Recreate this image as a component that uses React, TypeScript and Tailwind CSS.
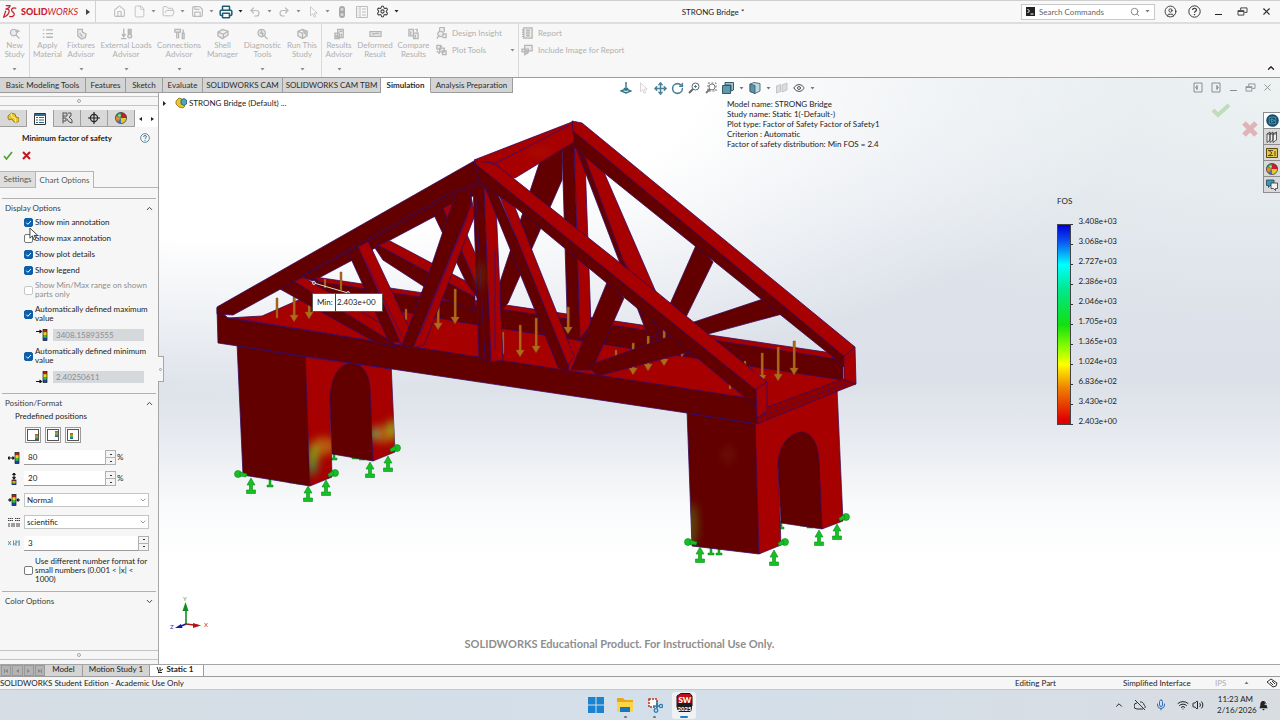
import React from "react";
import {
  ChevronDown,
  ChevronUp,
  CircleUser,
  Eye,
  File,
  FolderOpen,
  House,
  Mic,
  MousePointer2,
  Move,
  Printer,
  Redo2,
  RotateCw,
  Save,
  Search,
  Settings,
  Undo2,
  Volume2,
  Wifi,
  X,
} from "lucide-react";

const SMALL = 13;

function Caret({ className = "" }: { className?: string }) {
  return (
    <svg viewBox="0 0 5 3" className={"h-[3px] w-[5px] " + className}>
      <path d="M0.5 0h4L2.5 2.6z" fill="currentColor" />
    </svg>
  );
}

function HelpIcon({ className = "" }: { className?: string }) {
  return (
    <svg viewBox="0 0 24 24" fill="none" stroke="currentColor" strokeWidth="1.8" className={className}>
      <circle cx="12" cy="12" r="10.5" />
      <path d="M8.6 9.4c0-2 1.5-3.4 3.5-3.4s3.5 1.3 3.5 3.1c0 2.6-3.5 2.6-3.5 5.2" strokeWidth="2.2" />
      <path d="M12 16.6v2.2" strokeWidth="2.4" />
    </svg>
  );
}

function RestoreIcon({ className = "" }: { className?: string }) {
  return (
    <svg viewBox="0 0 12 10" fill="none" stroke="currentColor" className={className}>
      <path d="M1 4h6.5v5H1zM1 5h6.5M4 3.5V1h7v5H8" />
    </svg>
  );
}

/* ---------- title bar ---------- */

function QuickButton({
  label,
  children,
  menu = false,
  dark = false,
}: {
  label: string;
  children: React.ReactNode;
  menu?: boolean;
  dark?: boolean;
}) {
  return (
    <span className={"flex items-center " + (dark ? "text-[#3a3a3a]" : "text-[#bdbdbd]")}>
      <button aria-label={label} className="flex h-5 w-5 items-center justify-center">
        {children}
      </button>
      {menu && (
        <span className="flex w-[9px] justify-center">
          <Caret className={dark ? "text-[#222]" : "text-[#8a8a8a]"} />
        </span>
      )}
    </span>
  );
}

function TitleBar() {
  return (
    <header className="flex h-6 shrink-0 items-center border-t border-b-2 border-t-[#cfcfcf] border-b-[#dedede] bg-[#f8f8f8]">
      <div className="flex h-full w-24 shrink-0 items-center border-r border-[#d2d2d2] pl-[3px]">
        <svg viewBox="0 0 40 42" className="h-[15px] w-[14px]" fill="none" stroke="#c8202f" strokeWidth="3.6">
          <path d="M8 4h12c-1 5-6 9-13 10M7 14c8-1 12 2 10 9-2 7-7 12-15 14l6-18" />
          <path d="M38 12c-10-3-15 1-13 7 2 4 8 5 7 11-1 5-7 7-14 5" />
        </svg>
        <span className="ml-1 text-[9px] text-[#c8202f]">
          <b className="font-black">SOLID</b>
          <i>WORKS</i>
        </span>
        <svg viewBox="0 0 4 6" className="ml-auto mr-[5px] h-[6px] w-1">
          <path d="M0 0l4 3-4 3z" fill="#444" />
        </svg>
      </div>
      <nav className="ml-[13px] flex shrink-0 items-center">
        <QuickButton label="Home"><House size={SMALL} strokeWidth={2} /></QuickButton>
        <QuickButton label="New" menu><File size={SMALL} strokeWidth={1.6} /></QuickButton>
        <QuickButton label="Open" menu><FolderOpen size={SMALL} strokeWidth={1.8} /></QuickButton>
        <QuickButton label="Save" menu><Save size={SMALL} strokeWidth={2.2} /></QuickButton>
        <QuickButton label="Print" menu dark>
          <Printer size={14} strokeWidth={2.6} className="text-[#1f5d73]" />
        </QuickButton>
        <QuickButton label="Undo" menu><Undo2 size={12} strokeWidth={2.4} /></QuickButton>
        <QuickButton label="Redo" menu><Redo2 size={12} strokeWidth={2.4} /></QuickButton>
        <QuickButton label="Select" menu>
          <svg viewBox="0 0 12 16" className="h-3 w-[9px]">
            <path d="M2 1v12l3-2.700L7 15l2-1-2-4.500h4z" fill="#fafafa" stroke="#bbb" />
          </svg>
        </QuickButton>
        <QuickButton label="Rebuild">
          <svg viewBox="0 0 8 12" className="h-3 w-2">
            <rect x="1" y="0" width="6" height="12" rx="3" fill="#a8a8a8" />
            <circle cx="4" cy="3.200" r="1.500" fill="#d8d8d8" />
            <circle cx="4" cy="8.400" r="1.500" fill="#d8d8d8" />
          </svg>
        </QuickButton>
        <QuickButton label="File properties">
          <svg viewBox="0 0 12 12" className="h-3 w-3" fill="none" stroke="currentColor">
            <path d="M.5.5h11v11H.5zM4 .5v11M6 3h4M6 6h4M6 9h4M1.5 3h1M1.5 6h1M1.5 9h1" />
          </svg>
        </QuickButton>
        <QuickButton label="Options" menu dark><Settings size={SMALL} strokeWidth={1.9} /></QuickButton>
      </nav>
      <h1 className="min-w-0 flex-1 truncate pl-1 text-center text-[8px] text-[#1c1c1c]">STRONG Bridge *</h1>
      <div className="flex h-4 w-[134px] shrink-0 items-center border border-[#c9c9c9] bg-white px-1">
        <svg viewBox="0 0 9 9" className="h-[9px] w-[9px]">
          <rect width="9" height="9" fill="#222" />
          <path d="M1.500 2l2 2-2 2M4.500 7h3" stroke="#fff" fill="none" />
        </svg>
        <input
          aria-label="Search Commands"
          placeholder="Search Commands"
          className="ml-1 min-w-0 flex-1 bg-transparent text-[8px] outline-none placeholder:text-[#666]"
        />
        <Search size={10} className="text-[#777]" />
        <Caret className="ml-[5px] text-[#777]" />
      </div>
      <div className="ml-[3px] mr-[2px] flex shrink-0 items-center text-[#333]">
        <button aria-label="Account" className="flex w-6 justify-center"><CircleUser size={SMALL} strokeWidth={1.7} /></button>
        <button aria-label="Help" className="flex w-6 justify-center"><HelpIcon className="h-[13px] w-[13px]" /></button>
        <button aria-label="Minimize" className="flex w-6 justify-center pt-[6px]"><span className="h-px w-[7px] bg-[#222]" /></button>
        <button aria-label="Restore" className="flex w-6 justify-center"><RestoreIcon className="h-[9px] w-[11px]" /></button>
        <button aria-label="Close" className="flex w-6 justify-center"><X size={11} strokeWidth={2.4} /></button>
      </div>
    </header>
  );
}

/* ---------- ribbon ---------- */

const RIBBON_PATHS: Record<string, string> = {
  study: "M5 1a3.500 3.500 0 1 0 .1 0M7.500 7l4 4M9 1v4M7 3h4.500",
  list: "M1 1.500h1.500M4.500 1.500H12M1 5.500h1.500M4.500 5.500H12M1 9.500h1.500M4.500 9.500H12",
  fixture: "M2 1h5v3l4 2-1 4-4 1.500L2 8zM4 5l3 4",
  load: "M3 0v8M1 6l2 3 2-3M0 11h6M9.500 1v6M8 1h3v6a2 2 0 1 1-3 0z",
  bolt: "M1 1h6v3H1zM3 4v7M5 4v7M10 1v4M9 5h2v6H9z",
  shell: "M1 4l5-3 6 2v4l-6 4-5-3zM1 4l6 2 5-3M7 6v5",
  diag: "M5 1a4 4 0 1 0 .1 0M8 8l3.500 3.500M3 5h1l1-2 1 4 1-2",
  run: "M1 3l5-2 5 2v5l-5 3-5-3zM1 3l5 2 5-2M6 5v6M6 1l4 6",
  results: "M4 1h6v9H4zM1 5h5v6H1zM6 3h3M8 6v3M2.500 7v3M4.500 8v2",
  deform: "M0 3.500h12v5H0zM2 5.500c3 2 5-2 8 .500",
  compare: "M1 1h5v7H1zM6 5h5v6H6zM3 3v4M8 7v3M8 1h2v3",
  insight: "M4 0h5v5M4 0v4M5 4a3 3 0 1 0 .1 0M3 9l-2 3M8 7h3v4H7",
  plot: "M1 1h4v4H1zM4 4h5v4H4zM7 7h4v4H7zM6 1v2M1 7l3 3",
  page: "M2 .500h9v11H2zM0 2.500h2M0 5h2M0 7.500h2M0 10h2M4.500 3h4M4.500 5h4M4.500 7h4M4.500 9h4",
  image: "M3 1h8v6H3zM0 5h7v3H0zM3 8v3l4-2",
};

function RibbonIcon({ name }: { name: string }) {
  return (
    <svg
      viewBox="-0.5 -0.5 13 13"
      className="h-3 w-[13px] shrink-0"
      fill="#ebebeb"
      stroke="#b6b6b6"
      strokeWidth="1.4"
    >
      <path d={RIBBON_PATHS[name]} />
    </svg>
  );
}

function RibbonButton({ icon, lines, width, menu = false }: { icon: string; lines: string[]; width: string; menu?: boolean }) {
  return (
    <button className={"flex h-full shrink-0 flex-col items-center pt-1 " + width}>
      <RibbonIcon name={icon} />
      {lines.map((l) => (
        <span key={l} className="mt-px whitespace-nowrap text-[8px] leading-[8px]">
          {l}
        </span>
      ))}
      {menu && <Caret className="mt-[10px] text-[#8a8a8a]" />}
    </button>
  );
}

function Ribbon() {
  return (
    <section className="flex h-[54px] shrink-0 border-b border-[#9c9c9c] bg-[#f7f7f7] text-[#b0b0b0]">
      <div className="flex border-r border-[#dadada]">
        <RibbonButton icon="study" lines={["New", "Study"]} width="w-[29px]" menu />
      </div>
      <div className="flex border-r border-[#dadada]">
        <RibbonButton icon="list" lines={["Apply", "Material"]} width="w-[35px]" />
        <RibbonButton icon="fixture" lines={["Fixtures", "Advisor"]} width="w-8" menu />
        <RibbonButton icon="load" lines={["External Loads", "Advisor"]} width="w-[58px]" menu />
        <RibbonButton icon="bolt" lines={["Connections", "Advisor"]} width="w-12" menu />
        <RibbonButton icon="shell" lines={["Shell", "Manager"]} width="w-[39px]" />
        <RibbonButton icon="diag" lines={["Diagnostic", "Tools"]} width="w-[41px]" menu />
        <RibbonButton icon="run" lines={["Run This", "Study"]} width="w-[38px]" menu />
      </div>
      <div className="flex border-r border-[#dadada]">
        <RibbonButton icon="results" lines={["Results", "Advisor"]} width="w-[34px]" menu />
        <RibbonButton icon="deform" lines={["Deformed", "Result"]} width="w-[38px]" />
        <RibbonButton icon="compare" lines={["Compare", "Results"]} width="w-[39px]" />
        <div className="flex w-[85px] flex-col gap-[5px] pt-[3px] pl-[2px] text-[8px] leading-3">
          <button className="flex items-center gap-[4px]"><RibbonIcon name="insight" />Design Insight</button>
          <button className="flex items-center gap-[4px]">
            <RibbonIcon name="plot" />Plot Tools
            <Caret className="ml-auto mr-[3px] text-[#8a8a8a]" />
          </button>
        </div>
      </div>
      <div className="flex flex-col items-start gap-[5px] pl-[2px] pt-[3px] text-[8px] leading-3">
        <button className="flex items-center gap-[4px]"><RibbonIcon name="page" />Report</button>
        <button className="flex items-center gap-[4px]"><RibbonIcon name="image" />Include Image for Report</button>
      </div>
      <button aria-label="Collapse ribbon" className="ml-auto mr-1 mb-1 self-end text-[#222]">
        <ChevronUp size={10} strokeWidth={3} />
      </button>
    </section>
  );
}

const COMMAND_TABS = [
  { label: "Basic Modeling Tools", width: "w-[86px]" },
  { label: "Features", width: "w-10" },
  { label: "Sketch", width: "w-[37px]" },
  { label: "Evaluate", width: "w-10" },
  { label: "SOLIDWORKS CAM", width: "w-20" },
  { label: "SOLIDWORKS CAM TBM", width: "w-[98px]" },
  { label: "Simulation", width: "w-[50px]" },
  { label: "Analysis Preparation", width: "w-[82px]" },
];

function CommandTabs() {
  return (
    <nav className="flex h-[15px] shrink-0 text-[8px] text-[#2c2c2c]">
      {COMMAND_TABS.map((t) => (
        <button
          key={t.label}
          className={
            "flex items-center justify-center whitespace-nowrap border-r border-b border-r-[#9c9c9c] " +
            t.width +
            (t.label === "Simulation" ? " border-b-white bg-white font-bold" : " border-b-[#9c9c9c] bg-[#d4d4d4]")
          }
        >
          {t.label}
        </button>
      ))}
    </nav>
  );
}

/* ---------- property panel ---------- */

function Splitter() {
  return (
    <div className="flex h-[10px] shrink-0 items-center justify-center border-y border-[#c4c4c4]">
      <span className="h-[4px] w-[4px] rounded-full border border-[#a8a8a8]" />
    </div>
  );
}

function PartIcon({ className = "h-3 w-3" }: { className?: string }) {
  return (
    <svg viewBox="0 0 12 12" className={className}>
      <path d="M1 4l3-3 4 1 1 3 3 1v3l-3 2-3-2-1-2-3 1-1-2z" fill="#e9c62f" stroke="#8a6d10" strokeWidth=".8" />
      <path d="M4 1l1 4 3 1 1 5" fill="none" stroke="#fff3a8" strokeWidth=".9" />
    </svg>
  );
}

function Sphere({ className = "h-3 w-3" }: { className?: string }) {
  return (
    <svg viewBox="0 0 12 12" className={className}>
      <circle cx="6" cy="6" r="5.600" fill="#3a77c8" />
      <path d="M6 6V.400A5.600 5.600 0 0 1 11.600 6z" fill="#c81e2b" />
      <path d="M6 6V.400A5.600 5.600 0 0 0 .8 4z" fill="#2f9e44" />
      <path d="M6 6h5.600A5.600 5.600 0 0 1 6 11.600z" fill="#e3c52d" />
      <path d="M6 6L.8 4A5.600 5.600 0 0 0 2 10z" fill="#e58a1b" />
      <circle cx="6" cy="6" r="5.600" fill="none" stroke="#333" strokeWidth=".6" />
      <circle cx="4.500" cy="3.500" r="1.300" fill="#fff" opacity=".6" />
    </svg>
  );
}

function ManagerTabs() {
  const cell = "flex w-[27px] items-center justify-center border-r border-[#9f9f9f]";
  return (
    <div className="mt-1 flex h-[17px] shrink-0">
      <button aria-label="Feature tree" className={cell + " border-b bg-[#d8d8d8]"}><PartIcon /></button>
      <button aria-label="Property manager" className={cell}>
        <svg viewBox="0 0 12 12" className="h-3 w-3">
          <path d="M.500.500h11v11H.500z" fill="#fff" stroke="#333" />
          <path d="M.500 2h11" stroke="#2c6f90" strokeWidth="2" />
          <path d="M2 4.500h2M2 7h2M2 9.500h2M5 4.500h5M5 7h5M5 9.500h5" stroke="#2c6f90" strokeWidth="1.200" />
        </svg>
      </button>
      <button aria-label="Configurations" className={cell + " border-b bg-[#d8d8d8]"}>
        <svg viewBox="0 0 12 12" className="h-3 w-3" fill="none" stroke="#555">
          <path d="M2 .500v11M2 1h4v3H2M2 6h3v3H2M7 1h3v3l-2 1 3 3v3l-3-1M6 7l2 3" />
        </svg>
      </button>
      <button aria-label="Dimensions" className={cell + " border-b bg-[#d8d8d8]"}>
        <svg viewBox="0 0 12 12" className="h-3 w-3" fill="none" stroke="#222" strokeWidth="1.200">
          <circle cx="6" cy="6" r="3.600" />
          <path d="M6 0v12M0 6h12" />
        </svg>
      </button>
      <button aria-label="Appearances" className={cell + " border-b bg-[#d8d8d8]"}><Sphere /></button>
      <span className="flex flex-1 items-center justify-around bg-white text-[#222]">
        <svg viewBox="0 0 3 4" className="h-1 w-[3px]"><path d="M3 0v4L0 2z" fill="currentColor" /></svg>
        <svg viewBox="0 0 3 4" className="h-1 w-[3px]"><path d="M0 0v4l3-2z" fill="currentColor" /></svg>
      </span>
    </div>
  );
}

function CheckRow({
  id,
  label,
  checked = false,
  disabled = false,
  height = "h-4",
}: {
  id: string;
  label: string;
  checked?: boolean;
  disabled?: boolean;
  height?: string;
}) {
  return (
    <div className={"flex items-center pl-6 pr-2 " + height}>
      <span className="relative flex h-[9px] w-[9px] shrink-0">
        <input
          id={id}
          type="checkbox"
          defaultChecked={checked}
          disabled={disabled}
          className={
            "peer h-[9px] w-[9px] appearance-none rounded-[2px] border bg-white checked:border-[#0f5fa8] checked:bg-[#0f5fa8] " +
            (disabled ? "border-[#c8c8c8]" : "border-[#777]")
          }
        />
        <svg viewBox="0 0 9 9" className="pointer-events-none absolute inset-0 hidden h-[9px] w-[9px] peer-checked:block">
          <path d="M2.200 4.600l1.700 1.700 3-3.300" fill="none" stroke="#fff" />
        </svg>
      </span>
      <label htmlFor={id} className={"ml-[2px] leading-[9px] " + (disabled ? "text-[#8f8f8f]" : "")}>
        {label}
      </label>
    </div>
  );
}

function SectionHeader({ title, open = true }: { title: string; open?: boolean }) {
  return (
    <button className="flex h-4 w-full items-center justify-between border-t border-[#b0b0b0] pr-[2px] pl-[3px] pt-[3px] text-[#3c3c3c]">
      {title}
      {open ? <ChevronUp size={9} strokeWidth={2.6} /> : <ChevronDown size={9} strokeWidth={2.6} />}
    </button>
  );
}

function Spectrum({ mark }: { mark: "top" | "bottom" | "width" | "height" | "both" }) {
  const marks = {
    top: "M0 2.500h5M3.500 1l2 1.500-2 1.500",
    bottom: "M0 10.500h5M3.500 9l2 1.500-2 1.500",
    width: "M0 6h6M1.500 4.500L0 6l1.500 1.500M4.500 4.500L6 6 4.500 7.500",
    height: "M6 0v6M4.500 2L6 0l1.500 2M4.500 4L6 6l1.500-2",
    both: "M0 6h3M9 6h3M1.500 4.500L3 6 1.500 7.500M10.500 4.500L9 6l1.500 1.500",
  };
  const box = mark === "height" ? { x: 4, y: 7, h: 5 } : { x: mark === "both" ? 4 : 7, y: 0.5, h: 11 };
  return (
    <svg viewBox="0 0 12 12" className="h-3 w-3 shrink-0">
      <rect x={box.x} y={box.y} width="4" height={box.h} fill="#35c23a" />
      <rect x={box.x} y={box.y} width="4" height={box.h / 4} fill="#c01818" />
      <rect x={box.x} y={box.y + box.h / 4} width="4" height={box.h / 4} fill="#f2d21c" />
      <rect x={box.x} y={box.y + (box.h * 3) / 4} width="4" height={box.h / 4} fill="#1c3fb8" />
      <rect x={box.x} y={box.y} width="4" height={box.h} fill="none" stroke="#222" strokeWidth=".7" />
      <path d={marks[mark]} fill="none" stroke="#111" strokeWidth="1.100" />
    </svg>
  );
}

function LimitField({ label, value, mark }: { label: string; value: string; mark: "top" | "bottom" }) {
  return (
    <div className="flex h-[18px] items-center pr-[14px] pl-9">
      <Spectrum mark={mark} />
      <input
        aria-label={label}
        defaultValue={value}
        disabled
        className="ml-[5px] h-3 min-w-0 flex-1 bg-[#d6d9dc] px-[3px] text-[8px] text-[#8a8d90]"
      />
    </div>
  );
}

function Spin() {
  return (
    <span className="flex h-[15px] w-[11px] flex-col">
      <button aria-label="Increase" className="flex flex-1 items-center justify-center border border-[#b0b0b0] bg-[#f4f4f4]">
        <span className="h-px w-[2px] bg-[#333]" />
      </button>
      <button aria-label="Decrease" className="flex flex-1 items-center justify-center border border-t-0 border-[#b0b0b0] bg-[#f4f4f4]">
        <span className="h-px w-[2px] bg-[#333]" />
      </button>
    </span>
  );
}

function NumberRow({ label, value, icon, unit, height }: { label: string; value: string; icon: React.ReactNode; unit?: string; height: string }) {
  return (
    <div className={"flex items-center pl-2 " + height + (unit ? " pr-[34px]" : " pr-[9px]")}>
      {icon}
      <input
        aria-label={label}
        defaultValue={value}
        className="ml-1 h-[15px] min-w-0 flex-1 border-b border-[#9a9a9a] bg-white px-1 text-[8px] outline-none"
      />
      <Spin />
      {unit && <span className="w-2 pl-px">{unit}</span>}
    </div>
  );
}

function SelectRow({ label, value, icon }: { label: string; value: string; icon: React.ReactNode }) {
  return (
    <div className="flex h-[22px] items-center pr-[9px] pl-2">
      {icon}
      <span className="relative ml-1 flex flex-1">
        <select
          aria-label={label}
          defaultValue={value}
          className="h-[14px] w-full appearance-none border border-[#c4c4c4] bg-white px-[2px] text-[8px] leading-3 outline-none"
        >
          <option>{value}</option>
        </select>
        <ChevronDown size={8} className="pointer-events-none absolute top-[3px] right-[2px] text-[#666]" />
      </span>
    </div>
  );
}

function PropertyPanel() {
  return (
    <aside className="relative flex w-[159px] shrink-0 flex-col border-r border-[#a6a6a6] bg-[#f6f6f6] text-[8px] leading-[9px] text-[#222]">
      <div className="mt-[3px]"><Splitter /></div>
      <ManagerTabs />
      <div className="flex h-[22px] items-center pl-[22px] pr-2">
        <h2 className="font-bold">Minimum factor of safety</h2>
        <HelpIcon className="ml-auto h-[10px] w-[10px] text-[#2d6a86]" />
      </div>
      <div className="flex h-[22px] items-start gap-[9px] pt-[2px] pl-[3px]">
        <button aria-label="OK">
          <svg viewBox="0 0 10 9" className="h-[9px] w-[10px]"><path d="M1 5l2.500 3L9 1" fill="none" stroke="#4ea529" strokeWidth="1.700" /></svg>
        </button>
        <button aria-label="Cancel">
          <svg viewBox="0 0 9 9" className="h-[9px] w-[9px]"><path d="M1 1l7 7M8 1L1 8" fill="none" stroke="#c4161c" strokeWidth="2" /></svg>
        </button>
      </div>
      <div className="flex h-[17px] text-[#4e5f59]">
        <button className="w-9 border border-l-0 border-[#b5b5b5] bg-[#dedede]">Settings</button>
        <button className="w-[58px] border-t border-r border-[#b5b5b5]">Chart Options</button>
        <span className="flex-1 border-b border-[#b5b5b5]" />
      </div>

      <div className="mt-[10px] px-[2px]">
        <SectionHeader title="Display Options" />
      </div>
      <CheckRow id="min" label="Show min annotation" checked />
      <CheckRow id="max" label="Show max annotation" />
      <CheckRow id="details" label="Show plot details" checked />
      <CheckRow id="legend" label="Show legend" checked />
      <CheckRow id="range" label="Show Min/Max range on shown parts only" disabled height="h-6" />
      <CheckRow id="automax" label="Automatically defined maximum value" checked height="h-6" />
      <LimitField label="Maximum value" value="3408.15893555" mark="top" />
      <CheckRow id="automin" label="Automatically defined minimum value" checked height="h-6" />
      <LimitField label="Minimum value" value="2.40250611" mark="bottom" />

      <div className="mt-[7px] px-[2px]">
        <SectionHeader title="Position/Format" />
      </div>
      <p className="flex h-[14px] items-center pl-[15px]">Predefined positions</p>
      <div className="flex h-6 items-center gap-1 pl-[25px]">
        {["left-[7px] top-[4px]", "left-[7px] top-[1px]", "left-[2px] top-[3px]"].map((place, i) => (
          <button key={place} aria-label={"Position " + (i + 1)} className="h-4 w-4 border border-[#9c9c9c] bg-[#fafafa] p-px">
            <span className="relative block h-full w-full border border-[#555] bg-white">
              <span className={"absolute h-[6px] w-[3px] bg-linear-to-b from-[#d42a1a] via-[#5dc52c] to-[#18569c] " + place} />
            </span>
          </button>
        ))}
      </div>
      <NumberRow label="Horizontal position" value="80" unit="%" icon={<Spectrum mark="width" />} height="h-[21px]" />
      <NumberRow label="Vertical position" value="20" unit="%" icon={<Spectrum mark="height" />} height="h-[21px]" />
      <SelectRow label="Legend width" value="Normal" icon={<Spectrum mark="both" />} />
      <SelectRow
        label="Number format"
        value="scientific"
        icon={
          <svg viewBox="0 0 12 10" className="h-[10px] w-3 shrink-0" fill="none" stroke="#444">
            <path d="M0 1.500h5M7 1.500h5M0 3.500h5M7 3.500h5" strokeDasharray="1.500 .500" />
            <path d="M0 7h2M3 7h4M8 7h4M0 9h2M3 9h4M8 9h4" />
          </svg>
        }
      />
      <NumberRow
        label="Decimal places"
        value="3"
        icon={
          <svg viewBox="0 0 12 6" className="h-[6px] w-3 shrink-0" fill="none" stroke="#4a8ba5">
            <path d="M0 1l3 4M3 1L0 5M5.500.500v5M7 1h2v2H7v2h2M10 1h2v4h-2M10 3h2" strokeWidth=".9" />
          </svg>
        }
        height="h-5"
      />
      <CheckRow id="small" label="Use different number format for small numbers (0.001 < |x| < 1000)" height="h-[34px]" />

      <div className="mt-1 px-[2px]">
        <SectionHeader title="Color Options" open={false} />
      </div>
      <div className="mt-auto mb-1"><Splitter /></div>

      <button
        aria-label="Collapse panel"
        className="absolute top-[263px] -right-[6px] flex h-[26px] w-[6px] items-center justify-center border border-l-0 border-[#a6a6a6] bg-[#f6f6f6]"
      >
        <span className="h-[3px] w-[3px] rounded-full border border-[#a0a0a0]" />
      </button>
      <svg viewBox="0 0 12 16" className="pointer-events-none absolute top-[134px] left-[29px] h-[15px] w-[11px]">
        <path d="M1 1v11l2.700-2.500L5.500 14l2-1-1.900-4H9.500z" fill="#fff" stroke="#222" strokeWidth=".9" />
      </svg>
    </aside>
  );
}

/* ---------- graphics area ---------- */

const LIT = "#a60000";
const DIM = "#620000";

type Face = [string, string];

const BACK_FACES: Face[] = [
  [DIM, "297,276 460,186 574,124 574,142 460,203 313,281"],
  [DIM, "315,278 832,356 843,362 843,381 460,324 312,300"],
  [LIT, "315,277 832,353 843,360 700,338 520,312 320,282"],
  [DIM, "375,248 378,245 475,297 475,312 440,297 383,260"],
  [LIT, "378,245 390,241 475,286 475,297"],
  [DIM, "434,215 443,208 479,290 479,300 466,282"],
  [LIT, "443,208 453,203 479,262 479,290"],
  [DIM, "541,158 562,146 562,180 508,303 500,312 500,282"],
  [DIM, "562,146 574,140 580,338 568,344"],
  [LIT, "574,135 585,160 591,325 580,338"],
  [DIM, "573,140 584,153 655,312 668,340 648,336 618,258"],
  [LIT, "583,152 603,170 655,290 677,340 668,340 623,260"],
  [DIM, "697,243 713,262 687,315 672,342 655,338"],
  [DIM, "763,299 782,314 708,334 660,346 655,335"],
  [DIM, "572,129 845,356 845,368 833,357 603,172 574,147"],
  [LIT, "572,121 582,123 855,347 845,357 572,130"],
];

const DECK_FACES: Face[] = [
  [LIT, "262,316 310,295 460,322 640,350 843,380 765,412 748,400 228,318"],
  [LIT, "844,356 855,347 856,384 844,381"],
  ["#8c0000", "757,411 843,379 856,384 838,391 757,424"],
];

const PIER_FACES: Face[] = [
  [DIM, "237,343 306,352 310,486 243,475"],
  [DIM, "687,410 756,420 759,554 692,546"],
];

const FRONT_FACES: Face[] = [
  [DIM, "217,308 228,318 373,341 748,398 757,388 757,424 687,413 392,369 218,343"],
  [DIM, "280,289 292,280 385,330 396,347 375,342"],
  [LIT, "292,280 303,277 402,336 392,342"],
  [DIM, "347,250 357,243 401,342 389,342"],
  [LIT, "356,242 368,241 412,334 402,346"],
  [LIT, "470,192 475,215 424,345 412,348"],
  [DIM, "457,190 471,192 471,205 413,348 402,345 430,270"],
  [DIM, "473,185 484,185 491,362 479,358"],
  [LIT, "484,185 496,205 503,360 491,362"],
  [DIM, "482,180 495,188 569,360 568,374 558,367"],
  [LIT, "493,180 512,200 574,356 568,365"],
  [DIM, "608,280 624,298 592,370 571,370"],
  [DIM, "587,366 668,337 705,336 715,345 598,376"],
  [DIM, "217,307 474,161 484,162 484,178 233,315 217,314"],
  [LIT, "474,160 572,122 574,142 515,178 492,172"],
  [DIM, "474,161 487,168 757,388 757,406 748,400 608,284 515,207 480,183"],
  [LIT, "474,161 494,163 653,289 767,382 756,390 478,166"],
  [LIT, "756,389 767,382 767,411 757,418"],
];

const LOADS = [
  [277, 298, 318, 0], [294, 297, 322, 1], [309, 305, 319, 1], [325, 279, 288, 0], [341, 272, 290, 0],
  [406, 309, 320, 0], [438, 305, 330, 1], [455, 289, 324, 1], [503, 332, 354, 0], [520, 325, 357, 1],
  [536, 318, 353, 1], [568, 307, 334, 1], [616, 350, 359, 0], [633, 343, 375, 1], [648, 336, 371, 1],
  [664, 330, 366, 1], [682, 350, 357, 1], [730, 383, 389, 0], [745, 361, 367, 0], [762, 353, 382, 1],
  [778, 347, 381, 1], [794, 341, 375, 1],
];

const SUPPORTS = [
  [251, 478], [308, 486], [326, 480], [370, 462], [388, 456], [700, 547], [774, 550], [819, 530], [837, 524],
];
const STUBS = [[270, 483], [292, 479], [299, 480], [334, 456], [355, 455], [362, 456], [711, 551], [719, 551], [781, 525], [803, 522], [810, 524]];
const KNOBS = [[238, 474], [335, 473], [397, 448], [688, 542], [785, 542], [846, 517]];

function Faces({ list }: { list: Face[] }) {
  return (
    <g stroke="#360a62" strokeWidth=".8" strokeLinejoin="round">
      {list.map(([fill, points]) => (
        <polygon key={points} points={points} fill={fill} />
      ))}
    </g>
  );
}

function BridgeModel() {
  return (
    <svg viewBox="0 78 1280 586" className="absolute inset-0 h-full w-full" role="img" aria-label="Bridge factor of safety plot">
      <defs>
        <filter id="soft" x="-50%" y="-50%" width="200%" height="200%">
          <feGaussianBlur stdDeviation="4" />
        </filter>
        <clipPath id="legs">
          <polygon points="305,350 392,362 395,452 373,461 370,385 360,367 345,365 332,380 330,400 332,477 310,486" />
        </clipPath>
        <clipPath id="rightSide"><polygon points="687,410 756,420 759,554 692,546" /></clipPath>
      </defs>

      <g fill="#12b422" stroke="#0b8a18" strokeWidth=".5">
        {STUBS.map(([x, y]) => (
          <path key={x} d={`M${x - 1} ${y - 4}h2v6h2v2h-6v-2h2z`} />
        ))}
      </g>

      <Faces list={PIER_FACES} />
      <g stroke="#330a55" strokeWidth=".7">
        <path d="M328 355L374 362 373 461 332 454z" fill={DIM} />
        <path d="M776 430L822 430 822 529 781 523z" fill={DIM} />
        <path
          d="M305 350L391 362 395 452 373 461 370 388C369 373 362 364 352 363 338 364 331 378 330 398L332 477 310 486z"
          fill={LIT}
        />
        <path
          d="M755 420L837 388 843 521 822 529 819 461C818 442 811 432 801 432 788 434 779 446 778 464L781 545 759 554z"
          fill={LIT}
        />
      </g>
      <g clipPath="url(#legs)">
        <g filter="url(#soft)">
          <ellipse cx="324" cy="446" rx="13" ry="9" fill="#b85c0a" />
          <ellipse cx="313" cy="457" rx="5" ry="13" fill="#7aa51a" />
          <ellipse cx="312" cy="468" rx="4" ry="7" fill="#2aa04a" />
          <ellipse cx="385" cy="434" rx="13" ry="9" fill="#b05c0c" />
          <ellipse cx="373" cy="434" rx="4" ry="6" fill="#3aa860" />
          <ellipse cx="393" cy="428" rx="4" ry="9" fill="#8cb41c" />
        </g>
      </g>
      <g clipPath="url(#rightSide)">
        <ellipse cx="692" cy="525" rx="6" ry="22" fill="#5c5a10" filter="url(#soft)" opacity=".8" />
        <ellipse cx="728" cy="455" rx="7" ry="10" fill="#7a2008" filter="url(#soft)" opacity=".4" />
      </g>

      <Faces list={BACK_FACES} />
      <Faces list={DECK_FACES} />
      <path d="M415 348L740 398M235 318L372 341M758 417L846 384" fill="none" stroke="#3a0f80" strokeWidth=".9" strokeDasharray="4 2" />

      <g fill="#b06a1c" stroke="#7c430c" strokeWidth=".4">
        {LOADS.map(([x, top, bottom, head]) => (
          <path
            key={x}
            d={
              head
                ? `M${x - 1} ${top}h2.400V${bottom - 7}h3L${x} ${bottom}l-4.200-7h3.200z`
                : `M${x - 1} ${top}h2V${bottom}h-2z`
            }
          />
        ))}
      </g>
      <Faces list={FRONT_FACES} />
      <g fill="none" stroke="#2c1280" strokeWidth=".8">
        <path d="M300 277L458 188M237 346L305 357 392 369M687 413L756 424M476 198l9 160M420 335L468 215M366 262L402 337" opacity=".8" />
        <path d="M495 250v100M492 165L570 125" />
      </g>
      <ellipse cx="481" cy="275" rx="5" ry="14" fill="#6b3a06" opacity=".5" filter="url(#soft)" />
      <ellipse cx="540" cy="152" rx="14" ry="4" fill="#b82a08" opacity=".3" filter="url(#soft)" />

      <g fill="#16bf26" stroke="#0b8a18" strokeWidth=".6">
        {SUPPORTS.map(([x, y]) => (
          <path key={x} d={`M${x} ${y}l4 7h-2.500v5h3v3.500h-9v-3.500h3v-5H${x - 4}z`} />
        ))}
        {KNOBS.map(([x, y]) => (
          <g key={x}>
            <circle cx={x} cy={y} r="3.500" />
            <path d={x === 238 || x === 688 ? `M${x + 2} ${y - 2}l7 2-1 3-6-1z` : `M${x - 2} ${y - 2}l-5 3 1 3 5-2z`} />
          </g>
        ))}
      </g>

      <path d="M314 283L348 293" stroke="#d8d8d8" strokeWidth="1" />
      <circle cx="314" cy="283" r="1.500" fill="#555" stroke="#eee" strokeWidth=".8" />
      <circle cx="348" cy="293" r="1.500" fill="#555" stroke="#eee" strokeWidth=".8" />
      <rect x="312.500" y="293.500" width="70" height="18" fill="#fff" stroke="#555" />
      <path d="M335.500 294v17" stroke="#444" />
      <text x="317" y="305" fontSize="8" fill="#222">Min:</text>
      <text x="337" y="305" fontSize="8" fill="#222">2.403e+00</text>

      <g strokeWidth="1.600" fill="none">
        <path d="M186 624V606" stroke="#128a22" />
        <path d="M185.500 602l3 9h-6z" fill="#128a22" />
        <path d="M186 624l12 1.500" stroke="#b01818" />
        <path d="M201 625.500l-8-2.500v5z" fill="#b01818" />
        <path d="M186 624l-7 3" stroke="#141c9c" />
        <path d="M175 628l6-4 1.500 4z" fill="#141c9c" />
      </g>
      <text x="183" y="601" fontSize="6" fill="#3aa04a">Y</text>
      <text x="204" y="627" fontSize="6" fill="#c03030">X</text>
      <text x="170" y="629" fontSize="6" fill="#2030b0">Z</text>
    </svg>
  );
}

const LEGEND = [
  "3.408e+03", "3.068e+03", "2.727e+03", "2.386e+03", "2.046e+03", "1.705e+03",
  "1.365e+03", "1.024e+03", "6.836e+02", "3.430e+02", "2.403e+00",
];

function Legend() {
  return (
    <div className="absolute top-[103px] right-[163px] w-[60px] text-[8px] leading-[10px] text-[#1c1c1c]">
      <p>FOS</p>
      <div className="mt-[10px] flex">
        <div className="mt-[8px] h-[201px] w-4 border border-[#444] bg-[linear-gradient(to_bottom,#0000d8,#0a50f0_8%,#00ffff_20%,#00e890_32%,#10e010_50%,#90ff00_62%,#ffff00_70%,#f08000_82%,#e00000_98%)]" />
        <ol className="flex flex-col gap-[10px]">
          {LEGEND.map((v) => (
            <li key={v} className="flex">
              <span className="mt-[8px] h-px w-[2px] bg-[#333]" />
              <span className="ml-[5px]">{v}</span>
            </li>
          ))}
        </ol>
      </div>
    </div>
  );
}

function ViewToolbar() {
  const cell = "flex h-[14px] w-[17px] items-center justify-center";
  const caret = <span className="flex w-[10px] justify-center"><Caret className="text-[#777]" /></span>;
  return (
    <div className="absolute inset-x-0 -top-3 flex items-center justify-center pr-1 text-[#4d8196]">
      <button aria-label="Normal to" className={cell}>
        <svg viewBox="0 0 12 12" className="h-3 w-3" fill="none" stroke="#2f7387" strokeWidth="1.400">
          <path d="M6 0v8M4 6l2 2.500L8 6M1 9l5-2 5 2-5 2z" />
        </svg>
      </button>
      <button aria-label="Select" className={cell}>
        <svg viewBox="0 0 12 16" className="h-3 w-[9px]">
          <path d="M2 1v12l3-2.700L7 15l2-1-2-4.500h4z" fill="#fafafa" stroke="#ccc" />
        </svg>
      </button>
      <button aria-label="Pan" className={cell}><Move size={13} strokeWidth={2.8} /></button>
      <button aria-label="Rotate" className={cell}><RotateCw size={13} strokeWidth={2.8} /></button>
      <button aria-label="Zoom" className={cell}>
        <svg viewBox="0 0 12 12" className="h-3 w-3" fill="none" stroke="#666">
          <circle cx="7.500" cy="4.500" r="3.500" />
          <path d="M5 7l-4 4" strokeWidth="2" />
          <path d="M6 4.500h3M7.500 3v3" stroke="#4d8196" />
        </svg>
      </button>
      <button aria-label="Zoom to area" className={cell}>
        <svg viewBox="0 0 12 12" className="h-3 w-3" fill="none" stroke="#777">
          <path d="M3 1h8v8H3z" strokeDasharray="2 1.500" />
          <circle cx="7" cy="5" r="3" />
          <path d="M5 7l-4 4" strokeWidth="1.800" />
        </svg>
      </button>
      <button aria-label="View orientation" className={cell}>
        <svg viewBox="0 0 12 12" className="h-3 w-3" stroke="#2c4c58" strokeWidth=".9">
          <path d="M3 .500h8.500V8L9 9V3H3z" fill="#9fc3d0" />
          <path d="M.500 3.500H8.500v8H.500z" fill="#5a9bb2" />
        </svg>
      </button>
      {caret}
      <button aria-label="Display style" className={cell}>
        <svg viewBox="0 0 12 12" className="h-3 w-3" stroke="#3a5660" strokeWidth=".8">
          <path d="M1 2l4-1.500 6 1V9L6 11.500 1 9.500z" fill="#bcd9e2" />
          <path d="M6 3.500v8L1 9.500V2z" fill="#5696ac" />
        </svg>
      </button>
      {caret}
      <button aria-label="Section" className={cell}>
        <svg viewBox="0 0 12 12" className="h-3 w-3" fill="#ddd" stroke="#bbb" strokeWidth=".8">
          <path d="M.500 4l4-1.500v7L.500 11zM6 3l5-2v7l-5 2z" />
        </svg>
      </button>
      <button aria-label="Hide or show" className={cell}><Eye size={12} strokeWidth={2} className="text-[#555]" /></button>
      {caret}
    </div>
  );
}

function Viewport() {
  return (
    <main className="relative min-w-0 flex-1">
      <ViewToolbar />
      <div className="absolute -top-[11px] right-1 flex items-center text-[#8a8e94]">
        {["M4 3v5M2.500 5.500L4 4v3z", "M6 3v5M7.500 5.500L6 4v3z"].map((d) => (
          <button key={d} aria-label="Dock" className="flex w-[18px] justify-center">
            <svg viewBox="0 0 10 11" className="h-[11px] w-[10px]" fill="none" stroke="currentColor">
              <path d="M1 1h8v9H1z" /><path d={d} />
            </svg>
          </button>
        ))}
        <button aria-label="Minimize document" className="flex w-[17px] justify-center pt-[6px]"><span className="h-px w-[7px] bg-[#8a8e94]" /></button>
        <button aria-label="Restore document" className="flex w-[17px] justify-center"><RestoreIcon className="h-[9px] w-[11px]" /></button>
        <button aria-label="Close document" className="flex w-[17px] justify-center"><X size={11} /></button>
      </div>

      <div className="absolute top-1 left-1 flex items-center text-[8px] text-[#222]">
        <svg viewBox="0 0 3 5" className="h-[5px] w-[3px]"><path d="M0 0l3 2.500L0 5z" fill="#222" /></svg>
        <svg viewBox="0 0 12 12" className="ml-[9px] h-3 w-3">
          <path d="M1 4l3-3 3 1 1 5 2 2-2 2-4-1-3-3z" fill="#e9c62f" stroke="#8a6d10" strokeWidth=".8" />
          <path d="M6 3l3-1.500L11.500 3v4L9 8.500 6 7z" fill="#4aa3bf" stroke="#245b6e" strokeWidth=".8" />
        </svg>
        <span className="ml-[2px]">STRONG Bridge (Default) ...</span>
      </div>

      <div className="absolute top-[6px] right-[402px] w-[151px] whitespace-nowrap text-[8px] leading-[10px] text-[#1c1c1c]">
        <p>Model name: STRONG Bridge</p>
        <p>Study name: Static 1(-Default-)</p>
        <p>Plot type: Factor of Safety Factor of Safety1</p>
        <p>Criterion : Automatic</p>
        <p>Factor of safety distribution: Min FOS = 2.4</p>
      </div>
      <Legend />

      <svg viewBox="0 0 20 16" className="absolute top-[9px] right-[49px] h-4 w-5" fill="none">
        <path d="M2 8l5 5L18 3" stroke="#bfdcbb" strokeWidth="4" />
      </svg>
      <svg viewBox="0 0 16 16" className="absolute top-[28px] right-[22px] h-4 w-4" fill="none">
        <path d="M2 2l12 12M14 2L2 14" stroke="#dfb3b8" strokeWidth="5" />
      </svg>
      <nav className="absolute top-[19px] right-0 flex w-[17px] flex-col border-t border-l border-[#8d8d8d] bg-[#d9d9d9] [&>button]:flex [&>button]:h-4 [&>button]:items-center [&>button]:justify-center [&>button]:border-b [&>button]:border-[#8d8d8d]">
        <button aria-label="Resources" className="bg-white">
          <svg viewBox="0 0 12 12" className="h-[13px] w-[13px]">
            <circle cx="6" cy="6" r="5.800" fill="#14506c" />
            <path d="M3 3h6v6H3zM5 4.500L8 6 5 7.500z" fill="none" stroke="#5fa6c2" strokeWidth=".7" />
          </svg>
        </button>
        <button aria-label="Design library">
          <svg viewBox="0 0 12 12" className="h-3 w-3" fill="#eee" stroke="#333" strokeWidth=".8">
            <path d="M1 3l3-2v8l-3 2.500zM4 3l3-2v8l-3 2.500zM7 3l3.500-2v8L7 11.500zM1 3h9" />
          </svg>
        </button>
        <button aria-label="View palette">
          <svg viewBox="0 0 12 10" className="h-[10px] w-3" stroke="#5d4a10">
            <path d="M.500.500h11v9H.500z" fill="#e2c64c" />
            <path d="M2 2.500h5M2 7.500h5M3 2.500l3 2.500-3 2.500M9 3v5" fill="none" />
          </svg>
        </button>
        <button aria-label="Appearances library"><Sphere /></button>
        <button aria-label="Forum">
          <svg viewBox="0 0 12 12" className="h-3 w-3" strokeWidth=".8">
            <path d="M.500 1h7.500v5.500H4L2.500 8.500v-2h-2z" fill="#3f95b4" stroke="#1f4654" />
            <path d="M5 4h6.500v5.500H9.500v2l-2-2H5z" fill="#f2f2f2" stroke="#333" />
          </svg>
        </button>
      </nav>

      <p className="absolute inset-x-0 bottom-[12px] pr-[200px] text-center text-[11px] leading-4 font-bold text-[#8e8e8e]">
        SOLIDWORKS Educational Product. For Instructional Use Only.
      </p>
    </main>
  );
}

/* ---------- footer ---------- */

function DocumentTabs() {
  const tab = "flex items-center justify-center border-r border-[#9c9c9c] pb-[2px]";
  return (
    <nav className="flex h-3 shrink-0 border-t border-[#a4a4a4] bg-[#f8f8f8] text-[8px] leading-[9px] text-[#222]">
      <span className="flex w-[45px] gap-px bg-[#b4b4b4] pl-px">
        {["M4 0v4L1 2zM0 0h1v4H0z", "M4 0v4L1 2z", "M0 0v4l3-2z", "M0 0v4l3-2zM3 0h1v4H3z"].map((d) => (
          <button key={d} aria-label="Scroll tabs" className="flex flex-1 items-center justify-center border border-[#999]">
            <svg viewBox="0 0 4 4" className="h-1 w-1"><path d={d} fill="#888" /></svg>
          </button>
        ))}
      </span>
      <button className={tab + " w-[38px] bg-[#d4d4d4]"}>Model</button>
      <button className={tab + " w-[67px] bg-[#d4d4d4]"}>Motion Study 1</button>
      <button className={tab + " w-[54px] gap-[3px] bg-white pr-1 font-bold"}>
        <svg viewBox="0 0 8 8" className="h-2 w-2" fill="none" stroke="#222"><path d="M1 1l2 5M4 1v4l3-2M2 6.500h4" /></svg>
        Static 1
      </button>
    </nav>
  );
}

function StatusBar() {
  return (
    <footer className="flex h-[13px] shrink-0 items-center border-t border-[#9c9c9c] bg-[#f6f6f6] pb-px text-[8px] leading-[10px] text-[#222]">
      <span className="flex-1 whitespace-nowrap">SOLIDWORKS Student Edition - Academic Use Only</span>
      <span className="w-[108px]">Editing Part</span>
      <span className="w-[92px]">Simplified Interface</span>
      <span className="w-[29px] text-[#b0b0b0]">IPS</span>
      <Caret className="rotate-180 text-[#777]" />
      <svg viewBox="0 0 12 10" className="ml-[17px] mr-[2px] h-[10px] w-3" fill="none" stroke="#333">
        <path d="M1 4l4-3 6 4-1 3-3 1zM4 4l3 3M6 3l3 3" />
      </svg>
    </footer>
  );
}

function Taskbar() {
  return (
    <div className="flex h-[31px] shrink-0 items-center border-t border-[#c4c8cc] bg-linear-to-r from-[#d6dde4] via-[#d3dfea] to-[#d9dde2] text-[#222]">
      <div className="flex-1" />
      <div className="ml-[9px] flex items-center">
        <button aria-label="Start" className="flex w-[29px] justify-center">
          <svg viewBox="0 0 16 16" className="h-4 w-4" fill="#1b83d0">
            <path d="M0 0h7.500v7.500H0zM8.500 0H16v7.500H8.500zM0 8.500h7.500V16H0zM8.500 8.500H16V16H8.500z" />
          </svg>
        </button>
        <button aria-label="File Explorer" className="flex w-[30px] flex-col items-center">
          <svg viewBox="0 0 18 16" className="mt-1 h-4 w-[18px]">
            <path d="M1 1h6l2 2h8v12H1z" fill="#e3a81c" />
            <path d="M1 5h16v10H1z" fill="#fcd449" />
            <path d="M4 10h10v5H4z" fill="#1b76b8" />
          </svg>
          <span className="mt-[3px] h-[2px] w-[3px] rounded-full bg-[#777]" />
        </button>
        <button aria-label="Snipping Tool" className="flex w-[29px] flex-col items-center">
          <svg viewBox="0 0 16 16" className="mt-1 h-4 w-4" fill="none">
            <path d="M2 2h8v8H2z" fill="#fff" stroke="#b83220" strokeWidth="1.500" strokeDasharray="2 1" />
            <path d="M10 4v7M6 9h7" stroke="#2b7fb4" strokeWidth="1.600" />
            <circle cx="9" cy="13.500" r="1.800" stroke="#2b7fb4" strokeWidth="1.300" />
            <circle cx="14" cy="9" r="1.600" stroke="#2b7fb4" strokeWidth="1.300" />
          </svg>
          <span className="mt-[3px] h-[2px] w-[3px] rounded-full bg-[#777]" />
        </button>
        <button aria-label="SOLIDWORKS 2025" className="ml-[3px] flex h-[27px] w-[24px] flex-col items-center rounded-[3px] bg-[#eef2f5]">
          <svg viewBox="0 0 18 20" className="mt-px h-5 w-[18px]">
            <path d="M2 3l4-2.500h9L17 3v10l-3 3H3l-1-2z" fill="#b8121f" stroke="#3a0508" />
            <path d="M2 10h15v7l-2 2H4l-2-3z" fill="#1c1c1c" />
            <text x="3.500" y="9.500" fontSize="8" fontWeight="900" fill="#fff">SW</text>
            <text x="2.600" y="17.500" fontSize="6" fontWeight="900" fill="#fff">2025</text>
          </svg>
          <span className="mt-[3px] h-[2px] w-2 rounded-full bg-[#1d7fc0]" />
        </button>
      </div>
      <div className="flex flex-1 items-center justify-end pr-3">
        <ChevronUp size={10} strokeWidth={2.400} />
        <svg viewBox="0 0 12 12" className="ml-[10px] h-3 w-3" fill="none" stroke="#333">
          <path d="M1 1l10 10M3 4a3 3 0 0 0 0 6h6M6 3c2-.500 4 1 4 3 1 .500 1.500 1.500 1 3" />
        </svg>
        <Mic size={12} className="ml-[9px] text-[#2f6fc0]" />
        <Wifi size={12} className="ml-[10px]" />
        <Volume2 size={12} className="ml-[3px]" />
        <div className="ml-[13px] w-9 text-right text-[8px] leading-[11px] whitespace-nowrap">
          <p>11:23 AM</p>
          <p>2/16/2026</p>
        </div>
        <svg viewBox="0 0 10 12" className="ml-[6px] h-[11px] w-[9px]">
          <path d="M5 1c3 0 3.500 2 3.500 5L9.500 9h-9l1-3C1.500 3 2 1 5 1zM3.500 10h3L5 11.500z" fill="#222" />
          <path d="M6 2h3L6.500 5H9" stroke="#fff" strokeWidth=".8" fill="none" />
        </svg>
      </div>
    </div>
  );
}

export default function App() {
  return (
    <div className="flex min-h-screen flex-col overflow-hidden bg-white font-['Lato','Open_Sans',sans-serif]">
      <TitleBar />
      <Ribbon />
      <div className="relative flex flex-1 flex-col bg-[radial-gradient(70%_55%_at_20%_0%,#ffffff_0%,#ffffff_50%,rgba(255,255,255,0)_100%),radial-gradient(ellipse_at_100%_0%,rgba(240,246,244,0.8)_0%,rgba(240,246,244,0)_30%),linear-gradient(to_bottom,#e0e5ec_0%,#dde2ea_35%,#dce1e9_52%,#e8ebf0_62%,#f9fafb_73%,#ffffff_82%)]">
        <BridgeModel />
        <div className="relative flex flex-1 flex-col">
          <CommandTabs />
          <div className="flex flex-1">
            <PropertyPanel />
            <Viewport />
          </div>
        </div>
      </div>
      <DocumentTabs />
      <StatusBar />
      <Taskbar />
    </div>
  );
}
